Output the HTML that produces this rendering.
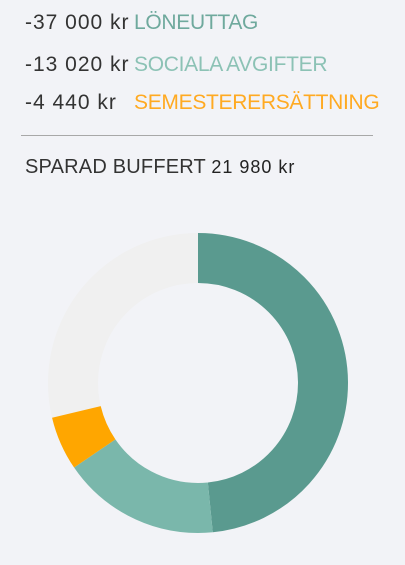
<!DOCTYPE html>
<html><head><meta charset="utf-8"><style>
html,body{margin:0;padding:0;width:405px;height:565px;background:#f2f3f7;overflow:hidden;font-family:"Liberation Sans",sans-serif;}
.l{position:absolute;left:25px;font-size:21px;color:#333;white-space:nowrap;letter-spacing:-0.3px}
.l b{font-weight:normal;letter-spacing:1px}
.l span{position:absolute;left:109px;top:0}
</style></head><body>
<div class="l" style="top:11px"><b>-37 000 kr</b><span style="color:#6fa99d">LÖNEUTTAG</span></div>
<div class="l" style="top:53px"><b>-13 020 kr</b><span style="color:#8cc2b5">SOCIALA AVGIFTER</span></div>
<div class="l" style="top:91px"><b>-4 440 kr</b><span style="color:#ffaa22">SEMESTERERSÄTTNING</span></div>
<div style="position:absolute;left:21px;top:135px;width:352px;height:1px;background:#a8a8a8"></div>
<div class="l" style="top:156px;font-size:20px;color:#333;letter-spacing:0.2px">SPARAD BUFFERT <span style="position:static;font-size:18px;color:#222;letter-spacing:1px">21 980 kr</span></div>
<svg width="405" height="565" style="position:absolute;left:0;top:0">
<g transform="rotate(-90 198 383)" fill="none" stroke-width="50">
<circle cx="198" cy="383" r="125" stroke="#f0f0f0"/>
<circle cx="198" cy="383" r="125" stroke="#5a9a8f" stroke-dasharray="380.2 1000"/>
<circle cx="198" cy="383" r="125" stroke="#7ab7ab" stroke-dasharray="0 380.2 133.8 1000"/>
<circle cx="198" cy="383" r="125" stroke="#ffa600" stroke-dasharray="0 514 45.6 1000"/>
</g>
</svg>
</body></html>
